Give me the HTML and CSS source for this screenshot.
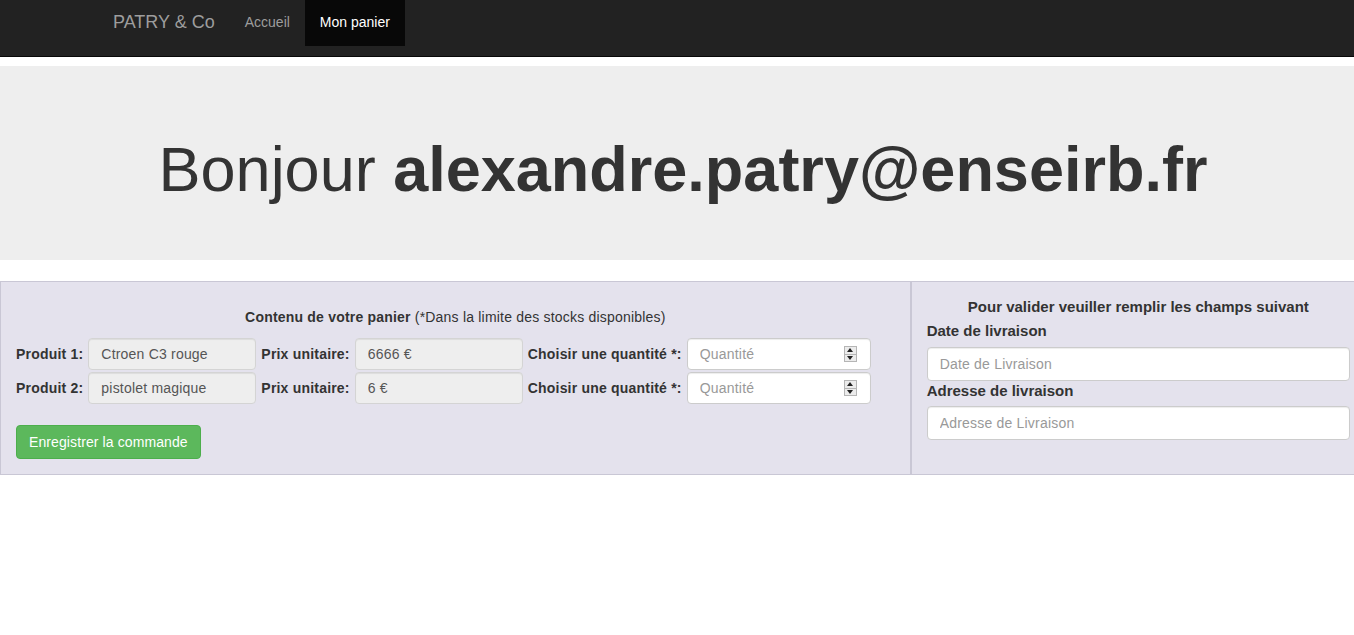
FILE: index.html
```html
<!DOCTYPE html>
<html lang="fr">
<head>
<meta charset="utf-8">
<title>PATRY &amp; Co</title>
<link rel="stylesheet" href="styles.css">
</head>
<body>
<div class="page">
  <nav class="navbar">
    <div class="container nav-inner">
      <a class="brand" href="#">PATRY &amp; Co</a>
      <a class="nav-link" href="#">Accueil</a>
      <a class="nav-link active" href="#">Mon panier</a>
    </div>
  </nav>

  <div class="jumbotron">
    <h1>Bonjour <b>alexandre.patry@enseirb.fr</b></h1>
  </div>

  <div class="panels">
    <div class="panel panel-cart">
      <p class="cart-title"><b>Contenu de votre panier</b> (*Dans la limite des stocks disponibles)</p>
      <div class="cart-rows">
        <div class="cart-row">
          <label class="lbl">Produit 1:</label>
          <input class="field ro w168" type="text" value="Ctroen C3 rouge" readonly>
          <label class="lbl">Prix unitaire:</label>
          <input class="field ro w168" type="text" value="6666 €" readonly>
          <label class="lbl">Choisir une quantité *:</label>
          <span class="qty">
            <input class="field w184" type="text" placeholder="Quantité">
            <span class="spin"><span class="up"></span><span class="down"></span></span>
          </span>
        </div>
        <div class="cart-row">
          <label class="lbl">Produit 2:</label>
          <input class="field ro w168" type="text" value="pistolet magique" readonly>
          <label class="lbl">Prix unitaire:</label>
          <input class="field ro w168" type="text" value="6 €" readonly>
          <label class="lbl">Choisir une quantité *:</label>
          <span class="qty">
            <input class="field w184" type="text" placeholder="Quantité">
            <span class="spin"><span class="up"></span><span class="down"></span></span>
          </span>
        </div>
      </div>
      <button class="btn-success" type="button">Enregistrer la commande</button>
    </div>

    <div class="panel panel-delivery">
      <p class="del-title">Pour valider veuiller remplir les champs suivant</p>
      <label class="blk-lbl first">Date de livraison</label>
      <input class="field full" type="text" placeholder="Date de Livraison">
      <label class="blk-lbl">Adresse de livraison</label>
      <input class="field full" type="text" placeholder="Adresse de Livraison">
    </div>
  </div>
</div>
</body>
</html>
```

FILE: styles.css
```css
* { box-sizing: border-box; }
html, body {
  margin: 0;
  padding: 0;
  overflow: hidden;
  background: #fff;
}
body {
  font-family: "Liberation Sans", Arial, sans-serif;
  font-size: 14px;
  line-height: 20px;
  color: #333;
  letter-spacing: 0.2px;
}
.page {
  width: 1366px;
}
.navbar {
  height: 57px;
  background: #222;
  border-bottom: 1px solid #080808;
  letter-spacing: 0;
}
.container {
  width: 1170px;
  margin: 0 auto;
  padding: 0 15px;
}
.nav-inner {
  display: flex;
  align-items: flex-start;
}
.brand {
  font-size: 18px;
  line-height: 20px;
  padding: 12px 15px 14px 0;
  color: #9d9d9d;
  text-decoration: none;
}
.nav-link {
  font-size: 14px;
  line-height: 20px;
  padding: 12px 15px 14px;
  color: #9d9d9d;
  text-decoration: none;
}
.nav-link.active {
  background: #080808;
  color: #fff;
}
.jumbotron {
  margin-top: 9px;
  background: #eee;
  padding: 69px 0 56px;
  text-align: center;
  letter-spacing: 0;
}
.jumbotron h1 {
  margin: 0;
  font-size: 63px;
  line-height: 69px;
  font-weight: normal;
  color: #333;
}
.jumbotron h1 b { font-weight: bold; }
.panels {
  margin-top: 21px;
  display: grid;
  grid-template-columns: 2fr 1fr;
  align-items: start;
}
.panel {
  background: #e4e2ed;
  border: 1px solid #c9c7d5;
  padding: 0 15px;
}
.panel-cart {
  padding-top: 25px;
  padding-bottom: 15px;
}
.cart-title {
  margin: 0;
  text-align: center;
}
.cart-rows {
  margin-top: 11px;
  display: flex;
  flex-direction: column;
  gap: 2px;
}
.cart-row {
  display: flex;
  align-items: center;
  gap: 5px;
}
.lbl {
  font-weight: bold;
}
.field {
  height: 32px;
  padding: 6px 12px;
  font-family: "Liberation Sans", Arial, sans-serif;
  font-size: 14px;
  letter-spacing: 0.2px;
  color: #555;
  background: #fff;
  border: 1px solid #ccc;
  border-radius: 4px;
  box-shadow: inset 0 1px 1px rgba(0,0,0,0.075);
  outline: none;
}
.field::placeholder { color: #999; }
.field.ro {
  background: #eee;
  border-color: #d4d4d4;
}
.w168 { width: 168px; }
.w184 { width: 184px; }
.qty {
  position: relative;
  display: inline-block;
  height: 32px;
}
.spin {
  position: absolute;
  right: 14px;
  top: 8px;
  width: 13px;
  height: 16px;
  background: #ececec;
  border: 1px solid #b5b5b5;
  display: flex;
  flex-direction: column;
}
.spin .up, .spin .down {
  flex: 1;
  display: flex;
  align-items: center;
  justify-content: center;
}
.spin .up { border-bottom: 1px solid #b5b5b5; }
.spin .up::before {
  content: "";
  border-left: 3px solid transparent;
  border-right: 3px solid transparent;
  border-bottom: 4px solid #222;
}
.spin .down::before {
  content: "";
  border-left: 3px solid transparent;
  border-right: 3px solid transparent;
  border-top: 4px solid #222;
}
.btn-success {
  margin-top: 21px;
  height: 34px;
  padding: 6px 12px;
  font-family: "Liberation Sans", Arial, sans-serif;
  font-size: 14px;
  line-height: 20px;
  letter-spacing: 0.1px;
  color: #fff;
  background: #5cb85c;
  border: 1px solid #4cae4c;
  border-radius: 4px;
}
.panel-delivery {
  padding-top: 15px;
  padding-bottom: 34px;
  display: flex;
  flex-direction: column;
}
.del-title {
  margin: 0;
  text-align: center;
  font-weight: bold;
  font-size: 15px;
  letter-spacing: 0;
}
.blk-lbl {
  font-weight: bold;
  font-size: 15px;
  letter-spacing: 0;
  margin-bottom: 5px;
}
.blk-lbl.first { margin-top: 4px; margin-bottom: 6px; }
.field.full {
  width: 100%;
  height: 34px;
}
```
